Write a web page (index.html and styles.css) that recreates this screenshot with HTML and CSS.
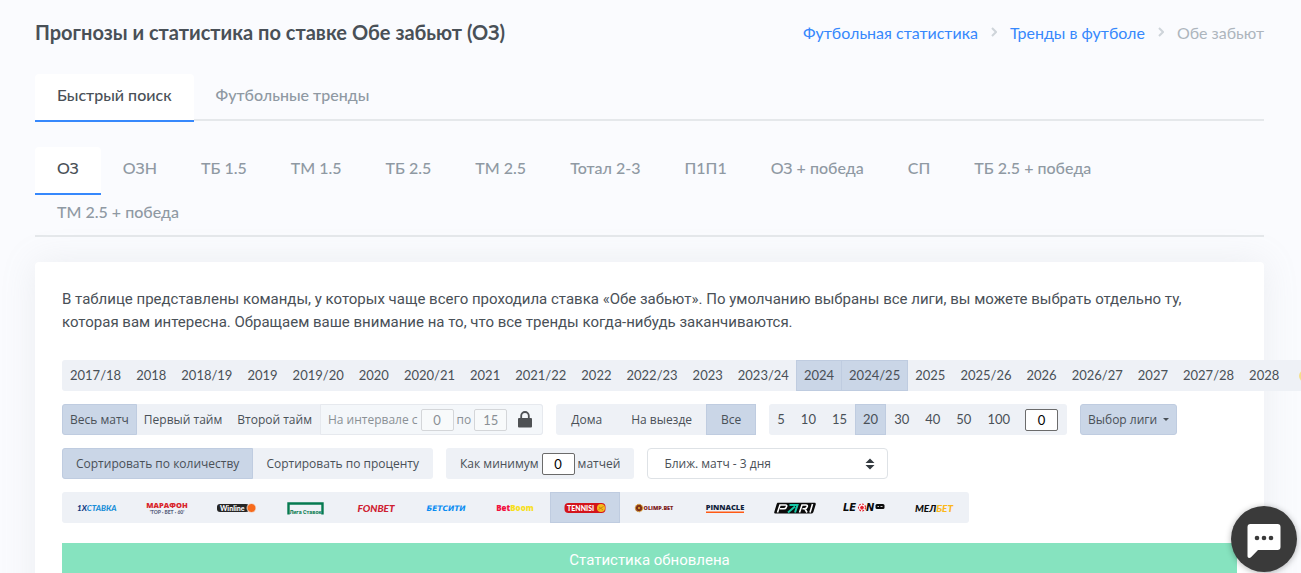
FILE: index.html
```html
<!DOCTYPE html>
<html lang="ru">
<head>
<meta charset="utf-8">
<meta name="viewport" content="width=device-width, initial-scale=1">
<title>Прогнозы и статистика по ставке Обе забьют (ОЗ)</title>
<link rel="stylesheet" href="styles.css">
</head>
<body>
<main class="page">
  <header class="page-head">
    <h1 class="page-title">Прогнозы и статистика по ставке Обе забьют (ОЗ)</h1>
    <nav class="crumbs" aria-label="Навигация">
      <a href="#">Футбольная статистика</a>
      <svg class="crumb-sep" viewBox="0 0 6 10" aria-hidden="true"><path d="M1 1l4 4-4 4"/></svg>
      <a href="#">Тренды в футболе</a>
      <svg class="crumb-sep" viewBox="0 0 6 10" aria-hidden="true"><path d="M1 1l4 4-4 4"/></svg>
      <span>Обе забьют</span>
    </nav>
  </header>

  <nav class="tabs tabs-main">
    <a class="tab active" href="#">Быстрый поиск</a>
    <a class="tab" href="#">Футбольные тренды</a>
  </nav>

  <nav class="tabs">
    <a class="tab active" href="#">ОЗ</a>
    <a class="tab" href="#">ОЗН</a>
    <a class="tab" href="#">ТБ 1.5</a>
    <a class="tab" href="#">ТМ 1.5</a>
    <a class="tab" href="#">ТБ 2.5</a>
    <a class="tab" href="#">ТМ 2.5</a>
    <a class="tab" href="#">Тотал 2-3</a>
    <a class="tab" href="#">П1П1</a>
    <a class="tab" href="#">ОЗ + победа</a>
    <a class="tab" href="#">СП</a>
    <a class="tab" href="#">ТБ 2.5 + победа</a>
    <a class="tab" href="#">ТМ 2.5 + победа</a>
  </nav>

  <section class="card">
    <p class="intro">В таблице представлены команды, у которых чаще всего проходила ставка «Обе забьют». По умолчанию выбраны все лиги, вы можете выбрать отдельно ту, которая вам интересна. Обращаем ваше внимание на то, что все тренды когда-нибудь заканчиваются.</p>

    <div class="filters">
      <div class="group digits">
        <button class="btn">2017/18</button><button class="btn">2018</button><button class="btn">2018/19</button><button class="btn">2019</button><button class="btn">2019/20</button><button class="btn">2020</button><button class="btn">2020/21</button><button class="btn">2021</button><button class="btn">2021/22</button><button class="btn">2022</button><button class="btn">2022/23</button><button class="btn">2023</button><button class="btn">2023/24</button><button class="btn on">2024</button><button class="btn on">2024/25</button><button class="btn">2025</button><button class="btn">2025/26</button><button class="btn">2026</button><button class="btn">2026/27</button><button class="btn">2027</button><button class="btn">2027/28</button><button class="btn">2028</button><button class="btn last" aria-label="Все сезоны"><span class="dot"></span></button>
      </div>

      <div class="row">
        <div class="group">
          <button class="btn on">Весь матч</button>
          <button class="btn">Первый тайм</button>
          <button class="btn">Второй тайм</button>
          <div class="interval">
            <label for="from">На интервале с</label>
            <input class="num" id="from" value="0" disabled>
            <label for="to">по</label>
            <input class="num" id="to" value="15" disabled>
            <svg class="lock" viewBox="0 0 14 17" aria-hidden="true"><path d="M3.200 8V4.800a3.800 3.800 0 0 1 7.600 0V8" fill="none" stroke="#4e5154" stroke-width="1.800"/><rect y="7" width="14" height="9.500" rx="1" fill="#4e5154"/></svg>
          </div>
        </div>
        <div class="group">
          <button class="btn wide">Дома</button>
          <button class="btn wide">На выезде</button>
          <button class="btn wide on">Все</button>
        </div>
        <div class="group digits counts">
          <button class="btn">5</button><button class="btn">10</button><button class="btn">15</button><button class="btn on">20</button><button class="btn">30</button><button class="btn">40</button><button class="btn">50</button><button class="btn">100</button>
          <input class="num count" value="0" aria-label="Количество матчей">
        </div>
        <button class="btn league on">Выбор лиги <span class="caret"></span></button>
      </div>

      <div class="row">
        <div class="group sorting">
          <button class="btn on">Сортировать по количеству</button>
          <button class="btn">Сортировать по проценту</button>
        </div>
        <div class="group minimum">
          <label for="min">Как минимум</label>
          <input class="num" id="min" value="0">
          <span>матчей</span>
        </div>
        <div class="select-wrap">
          <select class="select" aria-label="Ближайший матч"><option>Ближ. матч - 3 дня</option></select>
          <svg class="sort" viewBox="0 0 10 12" aria-hidden="true"><path d="M5 0.500L9.500 5h-9zM5 11.500L.5 7h9z" fill="#343a40"/></svg>
        </div>
      </div>

      <div class="group books">
        <button class="book"><svg viewBox="0 0 42 14"><text x="1" y="10" class="lg it" font-size="8" fill="#123a80">1X<tspan fill="#1a8fd8">СТАВКА</tspan></text></svg></button>
        <button class="book"><svg viewBox="0 0 42 14"><text x="21" y="7" class="lg heavy" text-anchor="middle" font-size="7.500" fill="#d9252c">МАРАФОН</text><text x="21" y="12.500" class="lg" text-anchor="middle" font-size="5" fill="#56607c">'TOP · БЕТ · 60'</text></svg></button>
        <button class="book"><svg viewBox="0 0 42 14"><rect x="2" y="3" width="32" height="8" rx="3" fill="#262626"/><text x="5" y="9.500" class="lg" font-size="7" fill="#fff">Winline</text><circle cx="36.500" cy="7" r="4.500" fill="#f76b1c" stroke="#eef1f6" stroke-width=".8"/></svg></button>
        <button class="book"><svg viewBox="0 0 42 14"><path d="M3.500 13.500V2.500h34v11" fill="none" stroke="#067a50" stroke-width="2.400"/><text x="20.500" y="13" class="cond" text-anchor="middle" font-size="5.500" fill="#067a50">Лига Ставок</text></svg></button>
        <button class="book"><svg viewBox="0 0 42 14"><text x="21" y="10.500" class="lg it" text-anchor="middle" font-size="10" fill="#cf2030">FONBET</text></svg></button>
        <button class="book"><svg viewBox="0 0 42 14"><text x="21" y="10" class="broad it" text-anchor="middle" font-size="7.500" fill="#0b8df2">БЕТСИТИ</text></svg></button>
        <button class="book"><svg viewBox="0 0 42 14"><text x="21" y="10" class="lg heavy" text-anchor="middle" font-size="8" fill="#f2123f">Bet<tspan fill="#f7e01d">Boom</tspan></text></svg></button>
        <button class="book on"><svg viewBox="0 0 42 14"><rect x=".5" y="2" width="41" height="10" rx="4" fill="#d3141b"/><text x="3" y="9.700" class="lg" font-size="7" fill="#fff">TENNISI</text><circle cx="37" cy="7" r="4" fill="#f5b81c"/><path d="M34.500 8.500l5-3M35 6l4 3" stroke="#b97d0a" stroke-width=".8"/></svg></button>
        <button class="book"><svg viewBox="0 0 42 14"><circle cx="5" cy="7" r="3.600" fill="#7b2b16" stroke="#d2942c" stroke-width="1.200" stroke-dasharray="1.500 .6"/><circle cx="5" cy="7" r="1.200" fill="#d2942c"/><text x="9.500" y="9" class="lg heavy" font-size="5.500" fill="#7c2020">OLIMP.BET</text></svg></button>
        <button class="book"><svg viewBox="0 0 42 14"><text x="21" y="9" class="lg heavy" text-anchor="middle" font-size="7.500" fill="#12233c">PINNACLE</text><path d="M2 11.300h38" stroke="#ff5a14" stroke-width="1.400"/></svg></button>
        <button class="book"><svg viewBox="0 0 42 14"><path d="M4 1.800h36.500c1 0 1.500.7 1.200 1.600l-2.300 7.600c-.3.900-1 1.500-2 1.500H1.500c-1 0-1.500-.7-1.200-1.600l2.300-7.600c.2-.9.700-1.500 1.400-1.500z" fill="#0b0b0b"/><g fill="none" stroke="#fff" stroke-width="1.600"><path d="M3.500 11.500L6 4h5.500c1.200 0 1.400.6 1.100 1.500-.4 1.400-1 2.300-2.500 2.300H6M25.500 11.500L28 4h4c1.200 0 1.600.7 1.200 1.700-.4 1.300-1.200 2-2.700 2h-2M31 8l2 3.500M36 11.500L38.500 3"/></g><path d="M14 11.500l7-6M15.500 4h8L21 11.500" fill="none" stroke="#18c9a8" stroke-width="2"/></svg></button>
        <button class="book"><svg viewBox="0 0 42 14"><text x="0" y="9.500" class="broad it" font-size="10" fill="#0b0b0b">LE</text><circle cx="19" cy="6.500" r="3.500" fill="#fff" stroke="#e3202d" stroke-width="1.200" stroke-dasharray="2 1.200"/><path d="M19 4.500l2 1.500-.8 2.400h-2.400l-.8-2.400z" fill="#e3202d"/><text x="23" y="9.500" class="broad it" font-size="10" fill="#0b0b0b">N</text><rect x="32.500" y="3" width="9" height="5" rx="1.500" fill="#0b0b0b"/><path d="M34.500 5.500h1.500M37.500 5.500h2" stroke="#c8c8c8"/></svg></button>
        <button class="book"><svg viewBox="0 0 42 14"><text x="21" y="10.500" class="lg it" text-anchor="middle" font-size="10" fill="#0b0b0b">МЕЛ<tspan fill="#fbb81b">БЕТ</tspan></text></svg></button>
      </div>
    </div>

    <div class="notice" role="status">Статистика обновлена</div>
  </section>
</main>

<button class="chat" aria-label="Открыть чат">
  <svg viewBox="0 0 34 36" aria-hidden="true"><path d="M3.500 1h27A3 3 0 0 1 33.500 4v20a3 3 0 0 1-3 3H11l-7 7.200C2.500 35.500.5 35 .5 33V4a3 3 0 0 1 3-3z" fill="#fff"/><g fill="#3a3a3a"><circle cx="10" cy="15" r="2.300"/><circle cx="17" cy="15" r="2.300"/><circle cx="24" cy="15" r="2.300"/></g></svg>
</button>
</body>
</html>
```
FILE: styles.css
```css
* {
  box-sizing: border-box;
}

body {
  margin: 0;
  height: 100vh;
  overflow: hidden;
  background: #fafbfe;
  color: #495057;
  font-family: Roboto, "Noto Sans", sans-serif;
  font-size: 15px;
  line-height: 23px;
}

button,
input,
select {
  font: inherit;
  color: inherit;
}

a {
  color: #3688fc;
  text-decoration: none;
}

.page {
  padding: 0 37px 0 35px;
}

.page-head {
  display: flex;
  justify-content: space-between;
  align-items: center;
  height: 64px;
  margin-bottom: 10px;
  font-family: Lato, sans-serif;
}

.page-title {
  margin: 0;
  font-size: 20px;
  font-weight: 700;
}

.crumbs {
  display: flex;
  align-items: center;
  gap: 13px;
  color: #adb5bd;
  font-size: 16px;
}

.crumb-sep {
  width: 6px;
  height: 10px;
  fill: none;
  stroke: #ced4da;
  stroke-width: 2px;
}

.tabs {
  display: flex;
  flex-wrap: wrap;
  margin-bottom: 25px;
  border-bottom: 2px solid #e5e8eb;
}

.tabs-main {
  margin-bottom: 26px;
  padding-bottom: 1px;
}

.tab {
  height: 44px;
  padding: 0 22px;
  color: #8f99a3;
  font-family: Lato, sans-serif;
  font-size: 16px;
  font-weight: 500;
  line-height: 42px;
}

.tab.active {
  height: 48px;
  margin-bottom: -4px;
  border-bottom: 2px solid #3688fc;
  border-radius: 4px 4px 0 0;
  background: #fff;
  color: #495057;
}

.card {
  padding: 26px 27px;
  min-height: 100vh;
  border-radius: 4px;
  background: #fff;
  box-shadow: 0 0 35px rgba(154, 161, 171, 0.15);
}

.intro {
  margin: 0 0 26px;
}

.filters {
  display: flex;
  flex-direction: column;
  align-items: flex-start;
  gap: 13px;
  margin-bottom: 20px;
  font-family: "Open Sans", "Noto Sans", sans-serif;
  font-size: 12px;
  line-height: 19px;
}

.row {
  display: flex;
  flex-wrap: wrap;
  gap: 13px;
}

.group {
  display: flex;
  align-items: center;
  height: 31px;
  border-radius: 3px;
  background: #eef1f6;
}

.digits {
  font-family: Lato, sans-serif;
  font-size: 13px;
}

.btn {
  flex: none;
  height: 31px;
  margin: 0 0 0 -1px;
  padding: 0 7px;
  border: 1px solid transparent;
  background: none;
  white-space: nowrap;
  cursor: pointer;
}

.counts .btn {
  margin-left: 0;
}

.btn:first-child {
  margin-left: 0;
  border-radius: 3px 0 0 3px;
}

.btn.wide {
  padding: 0 14px;
}

.sorting .btn {
  padding: 0 13px;
}

.btn.on,
.book.on {
  border-color: #bfcce0;
  background: #cad6e7;
}

.btn.league {
  margin: 0;
  border-radius: 3px;
}

.btn.last {
  padding-left: 12px;
}

.dot {
  display: block;
  width: 12px;
  height: 12px;
  border-radius: 50%;
  background: #f5e08a;
}

.caret {
  display: inline-block;
  margin-left: 3px;
  border: 3px solid transparent;
  border-top-color: #495057;
  border-bottom: 0;
  vertical-align: 3px;
}

.interval {
  display: flex;
  align-items: center;
  gap: 3px;
  height: 31px;
  padding: 0 10px 0 7px;
  border: 1px solid #e6e9ee;
  border-radius: 0 3px 3px 0;
  background: #f4f7fa;
  color: #8a9095;
}

.num {
  width: 33px;
  height: 22px;
  padding: 0;
  border: 1px solid #6b6b6b;
  border-radius: 2px;
  background: #fff;
  color: #000;
  font-family: Lato, sans-serif;
  font-size: 13px;
  text-align: center;
}

.num:disabled {
  border-color: #d4d6d9;
  background: #f8fafb;
  color: #8a9095;
}

.count {
  margin: 0 9px 0 7px;
}

.lock {
  width: 14px;
  height: 17px;
  margin-left: 8px;
}

.minimum {
  gap: 3px;
  padding: 0 14px;
}

.select-wrap {
  display: grid;
  width: 241px;
}

.select {
  grid-area: 1 / 1;
  height: 31px;
  padding: 0 16px;
  border: 1px solid #dee2e6;
  border-radius: 4px;
  background: #fff;
  appearance: none;
}

.sort {
  grid-area: 1 / 1;
  place-self: center end;
  width: 10px;
  height: 12px;
  margin-right: 13px;
  pointer-events: none;
}

.books {
  width: 907px;
  max-width: 100%;
}

.book {
  display: flex;
  flex: 1;
  align-items: center;
  justify-content: center;
  height: 31px;
  padding: 0;
  border: 1px solid transparent;
  background: none;
}

.book svg {
  width: 42px;
  height: 14px;
}

.lg {
  font-family: Lato, sans-serif;
  font-weight: 900;
}

.lg.heavy {
  font-family: "Open Sans", sans-serif;
  font-weight: 800;
}

.broad {
  font-family: "DejaVu Sans", sans-serif;
  font-weight: 700;
}

.it {
  font-style: italic;
}

.cond {
  font-family: Roboto, sans-serif;
  font-weight: 700;
}

.notice {
  padding: 6px 12px;
  background: #86e3bf;
  color: #fff;
  text-align: center;
}

.chat {
  position: fixed;
  right: 4px;
  bottom: 1px;
  display: grid;
  place-items: center;
  width: 66px;
  height: 66px;
  padding: 3px 0 0;
  border: 0;
  border-radius: 50%;
  background: #3a3a3a;
  box-shadow: 0 1px 6px rgba(0, 0, 0, 0.3);
}

.chat svg {
  width: 34px;
  height: 36px;
}
```
